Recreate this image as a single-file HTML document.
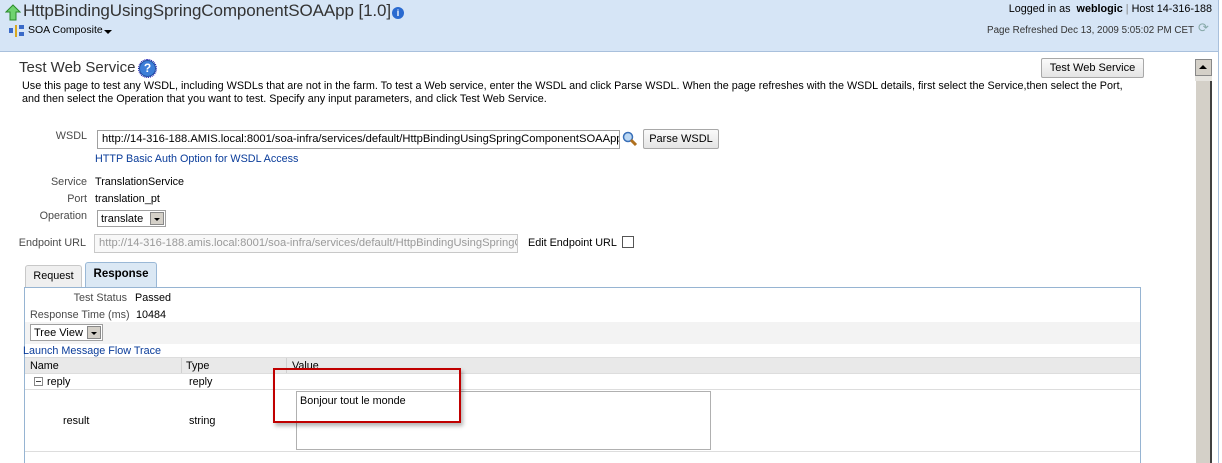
<!DOCTYPE html>
<html><head><style>
*{margin:0;padding:0;box-sizing:border-box}
body{width:1222px;height:463px;overflow:hidden;background:#fff;font-family:"Liberation Sans","DejaVu Sans",sans-serif;font-size:10.8px;color:#000;position:relative}
.a{position:absolute;white-space:nowrap}
.lbl{color:#4a4a4a;text-align:right}
.lnk{color:#0a3c9a}
.inp{position:absolute;border:1px solid #a0a0a0;background:#fff;height:19px;padding:2px 4px;overflow:hidden;white-space:nowrap;font-size:11.2px}
.btn{position:absolute;border:1px solid #a8a8a8;background:linear-gradient(#fafafa,#e4e4e4);text-align:center;font-size:11px;line-height:18px;border-radius:2px}
.sel{position:absolute;border:1px solid #a0a0a0;background:#fff;height:17px;padding:1px 3px;font-size:11px}
.sel i{position:absolute;right:1px;top:1px;width:14px;height:13px;background:#d4d0c8;border:1px solid #888;}
.sel i:after{content:"";position:absolute;left:3px;top:5px;border:3px solid transparent;border-top:3px solid #000;border-bottom:0}
</style></head><body>
<div class="a" style="left:0;top:0;width:1219px;height:52px;background:#d6e5f6;border-bottom:1px solid #a9c0dc"></div>
<div class="a" style="left:1218px;top:0;width:1px;height:463px;background:#a9c0dc"></div>
<svg class="a" style="left:5px;top:4px" width="16" height="18" viewBox="0 0 16 18"><path d="M8 1 L15 8 L11 8 L11 16 L5 16 L5 8 L1 8 Z" fill="#6fd36f" stroke="#2a8a2a" stroke-width="1"/></svg>
<div class="a" style="left:23px;top:1px;font-size:17px;color:#333;letter-spacing:-0.1px">HttpBindingUsingSpringComponentSOAApp [1.0]</div>
<div class="a" style="left:392px;top:7px;width:12px;height:12px;border-radius:50%;background:#2a6ad0;color:#fff;font-size:9px;font-weight:bold;text-align:center;line-height:12px">i</div>
<svg class="a" style="left:9px;top:25px" width="16" height="12"><rect x="0" y="3" width="4" height="5" fill="#3a6ac8"/><rect x="6" y="0" width="2" height="12" fill="#d8a820"/><rect x="10" y="0" width="5" height="4" fill="#3a6ac8"/><rect x="10" y="7" width="5" height="4" fill="#3a6ac8"/></svg>
<div class="a" style="left:28px;top:24px;font-size:10.5px">SOA Composite</div>
<div class="a" style="left:104px;top:30px;border:4px solid transparent;border-top:4px solid #000;border-bottom:0"></div>
<div class="a" style="right:10px;top:3px;font-size:10.8px">Logged in as &nbsp;<b>weblogic</b><span style="color:#888"> | </span>Host 14-316-188</div>
<div class="a" style="right:28px;top:25px;font-size:9.8px;color:#333">Page Refreshed Dec 13, 2009 5:05:02 PM CET</div>
<div class="a" style="left:1198px;top:20px;color:#8aa;font-size:13px">⟳</div>

<div class="a" style="left:19px;top:59px;font-size:15px;color:#333">Test Web Service</div>
<div class="a" style="left:139px;top:60px;width:17px;height:17px;border-radius:50%;background:#3d7ed8;border:1px solid #1e4fa0;color:#fff;font-weight:bold;font-size:12px;text-align:center;line-height:15px;outline:1px dotted #00a">?</div>
<div class="btn" style="left:1041px;top:58px;width:103px;height:20px">Test Web Service</div>
<div class="a" style="left:22px;top:80px;line-height:13px;font-size:10.8px">Use this page to test any WSDL, including WSDLs that are not in the farm. To test a Web service, enter the WSDL and click Parse WSDL. When the page refreshes with the WSDL details, first select the Service,then select the Port,<br>and then select the Operation that you want to test. Specify any input parameters, and click Test Web Service.</div>

<div class="a" style="left:1195px;top:59px;width:17px;height:17px;background:#d4d0c8;border:1px solid #888"></div>
<div class="a" style="left:1199px;top:65px;border:4px solid transparent;border-bottom:4px solid #000;border-top:0"></div>
<div class="a" style="left:1195px;top:76px;width:17px;height:5px;background:#e6e4df"></div>
<div class="a" style="left:1195px;top:81px;width:17px;height:382px;background:#d4d0c8;border-left:1px solid #fff;border-right:2px solid #404040"></div>

<div class="a lbl" style="left:40px;top:130px;width:47px">WSDL</div>
<div class="inp" style="left:97px;top:130px;width:523px">http://14-316-188.AMIS.local:8001/soa-infra/services/default/HttpBindingUsingSpringComponentSOAApp/T</div>
<svg class="a" style="left:622px;top:131px" width="16" height="16"><circle cx="6" cy="6" r="4.5" fill="#bcd8f4" stroke="#3a70b8" stroke-width="1.5"/><path d="M9 9 L14 14" stroke="#b0701e" stroke-width="3"/></svg>
<div class="btn" style="left:643px;top:129px;width:76px;height:20px">Parse WSDL</div>
<div class="a lnk" style="left:95px;top:153px">HTTP Basic Auth Option for WSDL Access</div>
<div class="a lbl" style="left:30px;top:176px;width:57px">Service</div>
<div class="a" style="left:95px;top:176px">TranslationService</div>
<div class="a lbl" style="left:30px;top:193px;width:57px">Port</div>
<div class="a" style="left:95px;top:193px">translation_pt</div>
<div class="a lbl" style="left:20px;top:210px;width:67px">Operation</div>
<div class="sel" style="left:97px;top:210px;width:69px;padding-top:2px">translate<i></i></div>
<div class="a lbl" style="left:10px;top:237px;width:76px">Endpoint URL</div>
<div class="inp" style="left:94px;top:234px;width:424px;color:#999;background:#f8f8f8;border-color:#c8c8c8">http://14-316-188.amis.local:8001/soa-infra/services/default/HttpBindingUsingSpringC</div>
<div class="a" style="left:528px;top:237px">Edit Endpoint URL</div>
<div class="a" style="left:622px;top:236px;width:12px;height:12px;border:1px solid #555;background:#fff"></div>

<div class="a" style="left:25px;top:265px;width:57px;height:23px;background:#efefef;border:1px solid #c8c8c8;border-bottom:0;border-radius:3px 3px 0 0;text-align:center;line-height:19px;padding-top:1px">Request</div>
<div class="a" style="left:85px;top:262px;width:72px;height:26px;background:#dbe8f4;border:1px solid #9ab8d6;border-bottom:0;border-radius:3px 3px 0 0;text-align:center;line-height:22px;font-weight:bold;font-size:11.5px">Response</div>
<div class="a" style="left:24px;top:287px;width:1117px;height:176px;border:1px solid #96b4d2;border-bottom:0;background:#fff"></div>
<div class="a lbl" style="left:30px;top:292px;width:97px">Test Status</div>
<div class="a" style="left:135px;top:292px">Passed</div>
<div class="a lbl" style="left:30px;top:309px;width:97px">Response Time (ms)</div>
<div class="a" style="left:136px;top:309px">10484</div>
<div class="a" style="left:25px;top:322px;width:1115px;height:22px;background:#f3f3f3"></div>
<div class="sel" style="left:30px;top:324px;width:73px;padding-top:2px">Tree View<i></i></div>
<div class="a lnk" style="left:23px;top:345px">Launch Message Flow Trace</div>
<div class="a" style="left:25px;top:357px;width:1115px;height:17px;background:#e9e9e9;border-top:1px solid #ddd;border-bottom:1px solid #ddd"></div>
<div class="a" style="left:181px;top:358px;width:1px;height:15px;background:#d0d0d0"></div>
<div class="a" style="left:286px;top:358px;width:1px;height:15px;background:#d0d0d0"></div>
<div class="a" style="left:30px;top:360px">Name</div>
<div class="a" style="left:186px;top:360px">Type</div>
<div class="a" style="left:292px;top:360px">Value</div>
<div class="a" style="left:34px;top:377px;width:9px;height:9px;border:1px solid #888;background:#fff"></div>
<div class="a" style="left:36px;top:381px;width:5px;height:1px;background:#444"></div>
<div class="a" style="left:47px;top:376px">reply</div>
<div class="a" style="left:189px;top:376px">reply</div>
<div class="a" style="left:25px;top:389px;width:1115px;height:1px;background:#ddd"></div>
<div class="a" style="left:63px;top:415px">result</div>
<div class="a" style="left:189px;top:415px">string</div>
<div class="a" style="left:296px;top:391px;width:415px;height:59px;border:1px solid #b0b0b0"></div>
<div class="a" style="left:300px;top:395px">Bonjour tout le monde</div>
<div class="a" style="left:25px;top:451px;width:1115px;height:1px;background:#ddd"></div>
<div class="a" style="left:273px;top:368px;width:188px;height:55px;border:2px solid #c00000;box-shadow:2px 3px 4px rgba(0,0,0,.3)"></div>
</body></html>
